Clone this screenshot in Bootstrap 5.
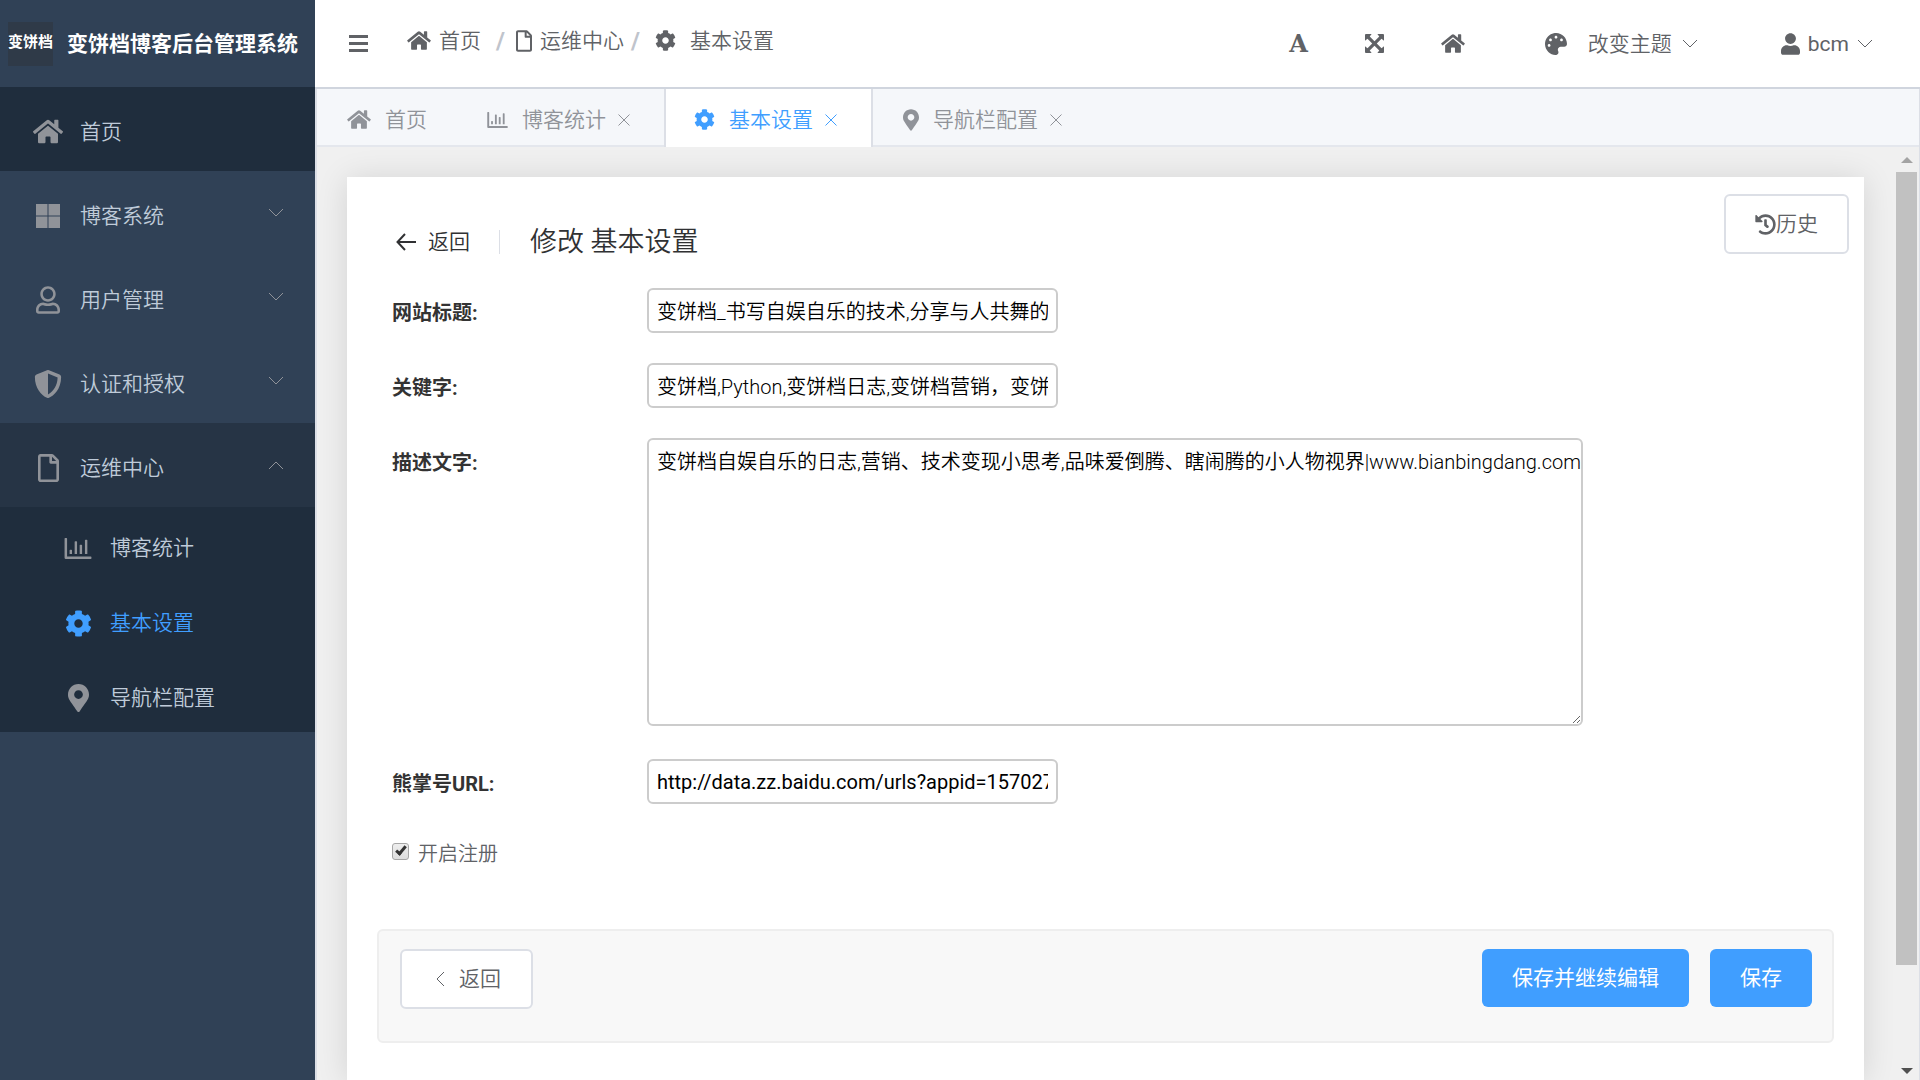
<!DOCTYPE html>
<html lang="zh-CN">
<head>
<meta charset="utf-8">
<meta name="viewport" content="width=device-width, initial-scale=1">
<title>变饼档博客后台管理系统</title>
<link href="https://cdn.jsdelivr.net/npm/bootstrap@5.3.0/dist/css/bootstrap.min.css" rel="stylesheet">
<style>
  body { font-family: Roboto, "Noto Sans CJK SC", sans-serif; font-size: 21px; line-height: 30px; font-weight: 350; color: #606266; background: #f0f0f0; }
  a { color: inherit; text-decoration: none; }
  svg { display: block; flex: none; fill: currentColor; }
  .thin { fill: none; stroke: currentColor; stroke-width: 1; }
  .gap-tab { gap: 14px; }
  .side { width: 315px; background: #304156; color: #bfcbd9; }
  .side-brand { height: 87px; padding: 0 8px; gap: 14px; color: #fff; font-weight: 700; }
  .side-logo { width: 45px; height: 44px; line-height: 40px; font-size: 15px; background: #2f3a48; }
  .side-link { height: 84px; padding: 5px 31px 0 33px; gap: 17px; }
  .side-link.home, .side-sub { background: #1f2d3d; }
  .side-link.open { background: #263445; }
  .side-sub .side-link { height: 75px; padding-left: 63px; padding-top: 7px; }
  .side-link.current { color: #409eff; }
  .side-ico { width: 30px; color: #909399; }
  .current .side-ico { color: #409eff; }
  .side-arrow { color: #909399; margin-bottom: 5px; }
  .top { height: 89px; padding: 0 47px 0 34px; background: #fff; border-bottom: 2px solid #d0d5de; }
  .plain-btn { background: none; border: 0; padding: 0; color: inherit; font-weight: inherit; }
  .crumbs { margin-left: 39px; padding-bottom: 6px; }
  .slash { width: 31px; color: #c0c4cc; font-size: 24px; font-weight: 700; }
  .tools { gap: 57px; }
  .tool-theme { gap: 10px; margin-left: 23px; }
  .tool-user { gap: 8px; margin-left: 26px; font-weight: 400; }
  .palette-ico { margin-right: 11px; }
  .tool-letter { font-family: "DejaVu Serif", serif; font-weight: 700; font-size: 24px; }
  .work { border-left: 2px solid #dcdfe6; border-right: 1px solid #dcdfe6; }
  .tabbar { height: 58px; background: #f5f7fa; border-bottom: 2px solid #e4e7ed; color: #909399; }
  .tab-item { height: 58px; padding: 3px 30px 0; gap: 12px; }
  .tab-item.closable { padding-right: 34px; }
  .tab-item.current { background: #fff; color: #409eff; border: solid #dcdfe6; border-width: 0 2px; padding-left: 28px; }
  .sheet-wrap { padding: 30px 30px 0; }
  .sheet { padding: 17px 15px 60px; background: #fff; box-shadow: 0 2px 30px rgba(0,0,0,.12); }
  .plain-act { height: 60px; padding: 0 29px; border: 2px solid #dcdfe6; border-radius: 6px; background: #fff; color: #606266; font-size: 21px; font-weight: inherit; }
  .plain-act.back { padding: 0 30px 0 33px; }
  .main-act { height: 58px; padding: 0 30px; border: 0; border-radius: 6px; background: #409eff; color: #fff; font-size: 21px; font-weight: 400; }
  .act-pair { gap: 21px; }
  .head-bar { color: #303133; padding: 30px 0 0 34px; }
  .head-rule { width: 1px; height: 24px; background: #dcdfe6; margin: 0 30px 0 29px; }
  .head-title { font-size: 27px; font-weight: inherit; margin: 0; line-height: 36px; }
  .fields { padding: 0 30px; margin-top: 28px; }
  .field-row { margin-bottom: 30px; font-size: 20px; }
  .field-row.after-area { padding-top: 3px; }
  .field-row.last { padding-bottom: 30px; padding-top: 5px; }
  .field-name { width: 255px; line-height: 30px; padding-top: 10px; color: #333; font-weight: 700; }
  .field-box { border: 2px solid #ccc; border-radius: 6px; padding: 0 8px; color: #000; font: 350 20px/28px Roboto, "Noto Sans CJK SC", sans-serif; background: #fff; }
  input.field-box { width: 411px; height: 45px; }
  input.field-box.latin { font-weight: 400; }
  textarea.field-box { width: 936px; height: 288px; padding: 8px 0 0 8px; display: block; }
  .tick { appearance: none; width: 17px; height: 17px; margin: 0 9px 6px 0; border: 1px solid #a6a6a6; border-radius: 3px; background: linear-gradient(#eee, #ddd); position: relative; }
  .tick:checked::after { content: ""; position: absolute; left: 5px; top: 0; width: 6px; height: 11px; border: solid #333; border-width: 0 3px 3px 0; transform: rotate(40deg); }
  .foot-bar { height: 114px; margin: 0 15px; padding: 18px 20px 0 21px; background: #f8f8f8; border: 2px solid #eee; border-radius: 6px; }
  .rail { width: 25px; color: #505050; }
  .rail-thumb { width: 21px; height: 793px; background: #c1c1c1; }
</style>
<script src="https://cdn.jsdelivr.net/npm/bootstrap@5.3.0/dist/js/bootstrap.bundle.min.js"></script>
</head>
<body class="vh-100 overflow-hidden d-flex">
<svg class="d-none" aria-hidden="true">
  <symbol id="i-home" viewBox="0 0 576 512"><path d="M280.37 148.26L96 300.11V464a16 16 0 0 0 16 16l112.06-.29a16 16 0 0 0 15.92-16V368a16 16 0 0 1 16-16h64a16 16 0 0 1 16 16v95.64a16 16 0 0 0 16 16.05L464 480a16 16 0 0 0 16-16V300L295.67 148.26a12.19 12.19 0 0 0-15.3 0zM571.6 251.47L488 182.56V44.05a12 12 0 0 0-12-12h-56a12 12 0 0 0-12 12v72.61L318.47 43a48 48 0 0 0-61 0L4.34 251.47a12 12 0 0 0-1.6 16.9l25.5 31A12 12 0 0 0 45.15 301l235.22-193.74a12.19 12.19 0 0 1 15.3 0L530.9 301a12 12 0 0 0 16.9-1.6l25.5-31a12 12 0 0 0-1.7-16.93z"/></symbol>
  <symbol id="i-win" viewBox="0 0 24 24"><path d="M0 0h11.5v11.5H0zM12.5 0H24v11.5H12.5zM0 12.5h11.5V24H0zM12.5 12.5H24V24H12.5z"/></symbol>
  <symbol id="i-user-o" viewBox="0 0 448 512"><path d="M313.6 304c-28.7 0-42.5 16-89.6 16-47.1 0-60.8-16-89.6-16C60.2 304 0 364.2 0 438.4V464c0 26.5 21.5 48 48 48h352c26.5 0 48-21.5 48-48v-25.6c0-74.2-60.2-134.4-134.4-134.4zM400 464H48v-25.6c0-47.6 38.8-86.4 86.4-86.4 14.6 0 38.3 16 89.6 16 51.7 0 74.9-16 89.6-16 47.6 0 86.4 38.8 86.4 86.4V464zM224 288c79.5 0 144-64.5 144-144S303.5 0 224 0 80 64.5 80 144s64.5 144 144 144zm0-240c52.9 0 96 43.1 96 96s-43.1 96-96 96-96-43.1-96-96 43.1-96 96-96z"/></symbol>
  <symbol id="i-user" viewBox="0 0 448 512"><path d="M224 256c70.7 0 128-57.3 128-128S294.7 0 224 0 96 57.3 96 128s57.3 128 128 128zm89.6 32h-16.7c-22.2 10.2-46.9 16-72.9 16s-50.6-5.8-72.9-16h-16.7C60.2 288 0 348.2 0 422.4V464c0 26.5 21.5 48 48 48h352c26.5 0 48-21.5 48-48v-41.6c0-74.2-60.2-134.4-134.4-134.4z"/></symbol>
  <symbol id="i-shield" viewBox="0 0 512 512"><path d="M466.5 83.7l-192-80a48.15 48.15 0 0 0-36.9 0l-192 80C27.7 91.1 16 108.6 16 128c0 198.5 114.5 335.7 221.5 380.3 11.8 4.9 25.1 4.9 36.9 0C360.1 472.6 496 349.3 496 128c0-19.4-11.7-36.9-29.5-44.3zM256.1 446.3l-.1-381 175.9 73.3c-3.3 151.4-82.1 261.1-175.8 307.7z"/></symbol>
  <symbol id="i-file" viewBox="0 0 384 512"><path d="M369.9 97.9L286 14C277 5 264.8-.1 252.1-.1H48C21.5 0 0 21.5 0 48v416c0 26.5 21.5 48 48 48h288c26.5 0 48-21.5 48-48V131.9c0-12.7-5.1-25-14.1-34zM332.1 128H256V51.9l76.1 76.1zM48 464V48h160v104c0 13.3 10.7 24 24 24h104v288H48z"/></symbol>
  <symbol id="i-chart" viewBox="0 0 512 400"><path d="M0 12a12 12 0 0 1 12-12h24a12 12 0 0 1 12 12v340h452a12 12 0 0 1 12 12v24a12 12 0 0 1-12 12H24a24 24 0 0 1-24-24zM96 236a12 12 0 0 1 12-12h22a12 12 0 0 1 12 12v68H96zM192 76a12 12 0 0 1 12-12h22a12 12 0 0 1 12 12v228h-46zM288 140a12 12 0 0 1 12-12h22a12 12 0 0 1 12 12v164h-46zM388 44a12 12 0 0 1 12-12h22a12 12 0 0 1 12 12v260h-46z"/></symbol>
  <symbol id="i-cog" viewBox="0 0 512 512"><path d="M487.4 315.7l-42.6-24.6c4.3-23.2 4.3-47 0-70.2l42.6-24.6c4.9-2.8 7.1-8.6 5.5-14-11.1-35.6-30-67.8-54.7-94.6-3.8-4.1-10-5.1-14.8-2.3L380.8 110c-17.9-15.4-38.5-27.3-60.8-35.1V25.8c0-5.6-3.9-10.5-9.4-11.7-36.7-8.2-74.3-7.8-109.2 0-5.5 1.2-9.4 6.1-9.4 11.7V75c-22.2 7.9-42.8 19.8-60.8 35.1L88.7 85.5c-4.9-2.8-11-1.9-14.8 2.3-24.7 26.7-43.6 58.9-54.7 94.6-1.7 5.4.6 11.2 5.5 14L67.3 221c-4.3 23.2-4.3 47 0 70.2l-42.6 24.6c-4.9 2.8-7.1 8.6-5.5 14 11.1 35.6 30 67.8 54.7 94.6 3.8 4.1 10 5.1 14.8 2.3l42.6-24.6c17.9 15.4 38.5 27.3 60.8 35.1v49.2c0 5.6 3.9 10.5 9.4 11.7 36.7 8.2 74.3 7.8 109.2 0 5.5-1.2 9.4-6.1 9.4-11.7v-49.2c22.2-7.9 42.8-19.8 60.8-35.1l42.6 24.6c4.9 2.8 11 1.9 14.8-2.3 24.7-26.7 43.6-58.9 54.7-94.6 1.5-5.5-.7-11.3-5.6-14.1zM256 336c-44.1 0-80-35.9-80-80s35.9-80 80-80 80 35.9 80 80-35.9 80-80 80z"/></symbol>
  <symbol id="i-pin" viewBox="0 0 384 512"><path d="M172.268 501.67C26.97 291.031 0 269.413 0 192 0 85.961 85.961 0 192 0s192 85.961 192 192c0 77.413-26.97 99.031-172.268 309.67-9.535 13.774-29.93 13.773-39.464 0zM192 272c44.183 0 80-35.817 80-80s-35.817-80-80-80-80 35.817-80 80 35.817 80 80 80z"/></symbol>
  <symbol id="i-palette" viewBox="0 0 512 512"><path d="M204.3 5C104.9 24.4 24.8 104.3 5.2 203.4c-37 187 131.7 326.4 258.8 306.7 41.2-6.4 61.4-54.6 42.5-91.7-23.1-45.4 9.9-98.4 60.9-98.4h79.7c35.8 0 64.8-29.6 64.9-65.3C511.5 97.1 368.1-26.9 204.3 5zM96 320c-17.7 0-32-14.3-32-32s14.3-32 32-32 32 14.3 32 32-14.3 32-32 32zm32-128c-17.7 0-32-14.3-32-32s14.3-32 32-32 32 14.3 32 32-14.3 32-32 32zm128-64c-17.7 0-32-14.3-32-32s14.3-32 32-32 32 14.3 32 32-14.3 32-32 32zm128 64c-17.7 0-32-14.3-32-32s14.3-32 32-32 32 14.3 32 32-14.3 32-32 32z"/></symbol>
  <symbol id="i-history" viewBox="0 0 512 512"><path d="M504 255.531c.253 136.64-111.18 248.372-247.82 248.468-59.015.042-113.223-20.53-155.822-54.911-11.077-8.94-11.905-25.541-1.839-35.607l11.267-11.267c8.609-8.609 22.353-9.551 31.891-1.984C173.062 425.135 212.781 440 256 440c101.705 0 184-82.311 184-184 0-101.705-82.311-184-184-184-48.814 0-93.149 18.969-126.068 49.932l50.754 50.754c10.08 10.08 2.941 27.314-11.313 27.314H24c-8.837 0-16-7.163-16-16V38.627c0-14.254 17.234-21.393 27.314-11.314l49.372 49.372C129.209 34.136 189.552 8 256 8c136.81 0 247.747 110.78 248 247.531zm-180.912 78.784l9.823-12.63c8.138-10.463 6.253-25.542-4.21-33.679L288 256.349V152c0-13.255-10.745-24-24-24h-16c-13.255 0-24 10.745-24 24v135.651l65.409 50.874c10.463 8.137 25.541 6.253 33.679-4.21z"/></symbol>
  <symbol id="i-expand" viewBox="0 0 20 20"><path d="M1 0h6l-2 2.6 5 5 5-5L13 0h6a1 1 0 0 1 1 1v6l-2.600-2-5 5 5 5 2.600-2v6a1 1 0 0 1-1 1h-6l2-2.600-5-5-5 5 2 2.600H1a1 1 0 0 1-1-1v-6l2.600 2 5-5-5-5L0 7V1a1 1 0 0 1 1-1z"/></symbol>
  <symbol id="i-bars" viewBox="0 0 19 17"><path d="M0 0h19v3H0zM0 7h19v3H0zM0 14h19v3H0z"/></symbol>
  <symbol id="i-down" viewBox="0 0 16 10"><path class="thin" d="M1 1l7 7 7-7"/></symbol>
  <symbol id="i-up" viewBox="0 0 16 10"><path class="thin" d="M1 9l7-7 7 7"/></symbol>
  <symbol id="i-close" viewBox="0 0 12 12"><path class="thin" d="M.5.5l11 11M11.500.5l-11 11"/></symbol>
</svg>

<aside class="side flex-shrink-0">
  <div class="side-brand d-flex align-items-center text-nowrap">
    <span class="side-logo">变饼档</span><span>变饼档博客后台管理系统</span>
  </div>
  <nav>
    <a href="#" class="side-link home d-flex align-items-center"><span class="side-ico d-flex justify-content-center"><svg width="30" height="27"><use href="#i-home"/></svg></span>首页</a>
    <a href="#" class="side-link d-flex align-items-center"><span class="side-ico d-flex justify-content-center"><svg width="24" height="24"><use href="#i-win"/></svg></span><span class="flex-grow-1">博客系统</span><svg class="side-arrow" width="16" height="10"><use href="#i-down"/></svg></a>
    <a href="#" class="side-link d-flex align-items-center"><span class="side-ico d-flex justify-content-center"><svg width="24" height="28"><use href="#i-user-o"/></svg></span><span class="flex-grow-1">用户管理</span><svg class="side-arrow" width="16" height="10"><use href="#i-down"/></svg></a>
    <a href="#" class="side-link d-flex align-items-center"><span class="side-ico d-flex justify-content-center"><svg width="28" height="28"><use href="#i-shield"/></svg></span><span class="flex-grow-1">认证和授权</span><svg class="side-arrow" width="16" height="10"><use href="#i-down"/></svg></a>
    <a href="#" class="side-link open d-flex align-items-center"><span class="side-ico d-flex justify-content-center"><svg width="21" height="28"><use href="#i-file"/></svg></span><span class="flex-grow-1">运维中心</span><svg class="side-arrow" width="16" height="10"><use href="#i-up"/></svg></a>
    <div class="side-sub">
      <a href="#" class="side-link d-flex align-items-center"><span class="side-ico d-flex justify-content-center"><svg width="28" height="21"><use href="#i-chart"/></svg></span>博客统计</a>
      <a href="#" class="side-link current d-flex align-items-center"><span class="side-ico d-flex justify-content-center"><svg width="27" height="27"><use href="#i-cog"/></svg></span>基本设置</a>
      <a href="#" class="side-link d-flex align-items-center"><span class="side-ico d-flex justify-content-center"><svg width="21" height="28"><use href="#i-pin"/></svg></span>导航栏配置</a>
    </div>
  </nav>
</aside>

<div class="d-flex flex-column flex-grow-1 overflow-hidden">
  <header class="top d-flex align-items-center flex-shrink-0">
    <button class="plain-btn" aria-label="菜单"><svg width="19" height="17"><use href="#i-bars"/></svg></button>
    <nav class="crumbs d-flex align-items-center" aria-label="路径">
      <a href="#" class="d-flex align-items-center gap-2"><svg width="24" height="21"><use href="#i-home"/></svg>首页</a>
      <span class="slash text-center ms-1">/</span>
      <a href="#" class="d-flex align-items-center gap-2"><svg width="16" height="22"><use href="#i-file"/></svg>运维中心</a>
      <span class="slash pe-2 text-center">/</span>
      <a href="#" class="d-flex align-items-center gap-tab"><svg width="21" height="21"><use href="#i-cog"/></svg>基本设置</a>
    </nav>
    <div class="tools d-flex align-items-center ms-auto">
      <button class="plain-btn tool-letter" aria-label="字体">A</button>
      <button class="plain-btn" aria-label="全屏"><svg width="19" height="19"><use href="#i-expand"/></svg></button>
      <button class="plain-btn" aria-label="主页"><svg width="24" height="21"><use href="#i-home"/></svg></button>
      <button class="plain-btn tool-theme d-flex align-items-center"><svg class="palette-ico" width="22" height="22"><use href="#i-palette"/></svg>改变主题<svg width="16" height="10"><use href="#i-down"/></svg></button>
      <button class="plain-btn tool-user d-flex align-items-center"><svg width="19" height="22"><use href="#i-user"/></svg>bcm<svg width="16" height="10"><use href="#i-down"/></svg></button>
    </div>
  </header>

  <main class="work d-flex flex-column flex-grow-1 overflow-hidden">
    <div class="tabbar d-flex flex-shrink-0">
      <div class="tab-item d-flex align-items-center"><a href="#" class="d-flex align-items-center gap-tab"><svg width="24" height="21"><use href="#i-home"/></svg>首页</a></div>
      <div class="tab-item closable d-flex align-items-center"><a href="#" class="d-flex align-items-center gap-tab"><svg width="21" height="16"><use href="#i-chart"/></svg>博客统计</a><button class="plain-btn" aria-label="关闭"><svg width="12" height="12"><use href="#i-close"/></svg></button></div>
      <div class="tab-item closable current d-flex align-items-center"><a href="#" class="d-flex align-items-center gap-tab"><svg width="21" height="21"><use href="#i-cog"/></svg>基本设置</a><button class="plain-btn" aria-label="关闭"><svg width="12" height="12"><use href="#i-close"/></svg></button></div>
      <div class="tab-item closable d-flex align-items-center"><a href="#" class="d-flex align-items-center gap-tab"><svg width="16" height="22"><use href="#i-pin"/></svg>导航栏配置</a><button class="plain-btn" aria-label="关闭"><svg width="12" height="12"><use href="#i-close"/></svg></button></div>
    </div>
    <div class="d-flex flex-grow-1 overflow-hidden">
      <div class="sheet-wrap d-flex flex-grow-1 overflow-hidden">
        <form class="sheet flex-grow-1">
          <div class="d-flex justify-content-between align-items-start">
            <div class="head-bar d-flex align-items-center">
              <a href="#" class="d-flex align-items-center gap-2"><svg class="me-1" width="20" height="18" viewBox="0 0 20 18"><path fill="none" stroke="currentColor" stroke-width="2" d="M9 1L1.500 9 9 17M1.500 9H20"/></svg>返回</a>
              <span class="head-rule"></span>
              <h1 class="head-title">修改 基本设置</h1>
            </div>
            <button type="button" class="plain-act d-flex align-items-center"><svg width="21" height="21"><use href="#i-history"/></svg>历史</button>
          </div>
          <div class="fields">
            <div class="field-row d-flex"><label class="field-name" for="f-title">网站标题:</label><input class="field-box" id="f-title" type="text" value="变饼档_书写自娱自乐的技术,分享与人共舞的思想"></div>
            <div class="field-row d-flex"><label class="field-name" for="f-key">关键字:</label><input class="field-box" id="f-key" type="text" value="变饼档,Python,变饼档日志,变饼档营销，变饼档技术"></div>
            <div class="field-row d-flex"><label class="field-name" for="f-desc">描述文字:</label><textarea class="field-box" id="f-desc">变饼档自娱自乐的日志,营销、技术变现小思考,品味爱倒腾、瞎闹腾的小人物视界|www.bianbingdang.com</textarea></div>
            <div class="field-row after-area d-flex"><label class="field-name" for="f-url">熊掌号URL:</label><input class="field-box latin" id="f-url" type="text" value="http://data.zz.baidu.com/urls?appid=1570270000"></div>
            <div class="field-row last d-flex align-items-center"><input class="tick" id="f-reg" type="checkbox" checked><label for="f-reg">开启注册</label></div>
          </div>
          <div class="foot-bar d-flex justify-content-between align-items-start">
            <button type="button" class="plain-act back d-flex align-items-center gap-tab"><svg width="10" height="16" viewBox="0 0 10 16"><path class="thin" d="M9 1L2 8l7 7"/></svg>返回</button>
            <div class="act-pair d-flex"><button type="submit" class="main-act">保存并继续编辑</button><button type="submit" class="main-act">保存</button></div>
          </div>
        </form>
      </div>
      <div class="rail d-flex flex-column align-items-center">
        <svg class="my-2" width="12" height="9" viewBox="0 0 12 9"><path fill="#a3a3a3" d="M6 2l6 6H0z"/></svg>
        <div class="rail-thumb"></div>
        <svg class="mt-auto mb-1" width="12" height="9" viewBox="0 0 12 9"><path d="M0 1h12L6 7z"/></svg>
      </div>
    </div>
  </main>
</div>
</body>
</html>
